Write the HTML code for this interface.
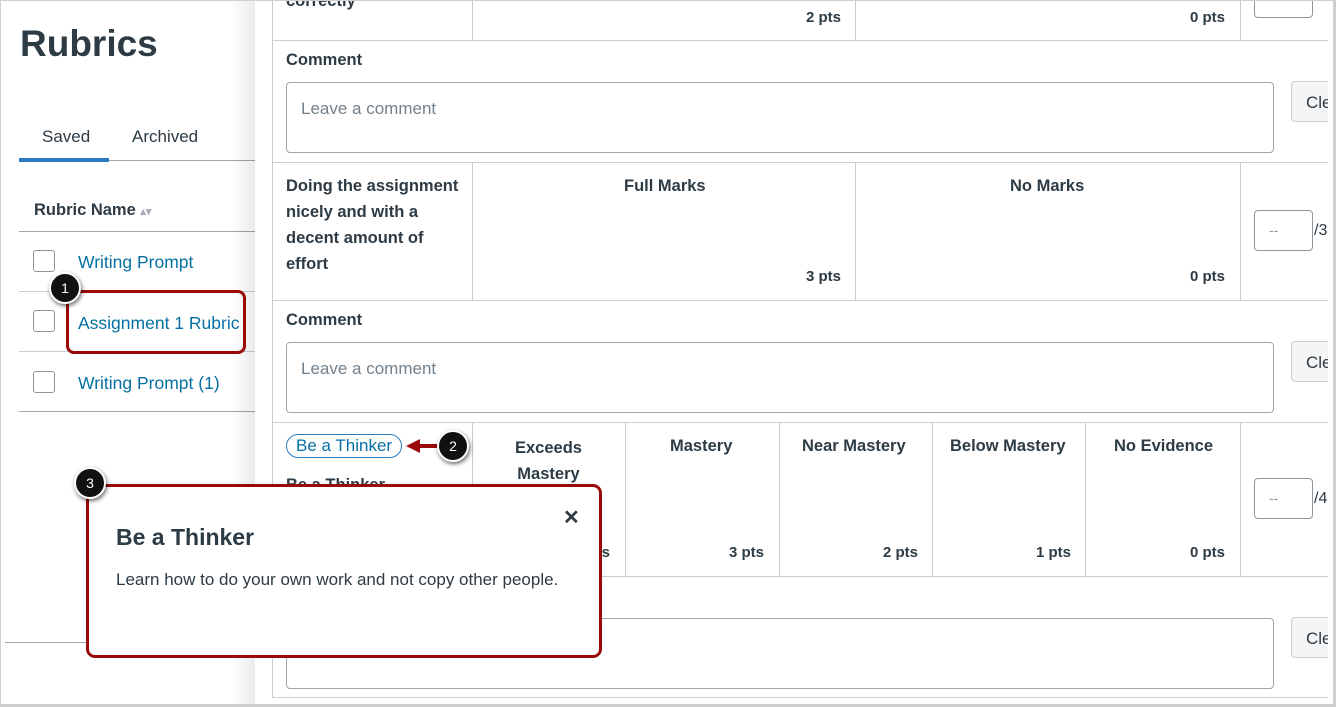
<!DOCTYPE html>
<html><head><meta charset="utf-8"><style>
*{box-sizing:border-box;margin:0;padding:0}
body{width:1336px;height:707px;overflow:hidden;background:#fff;font-family:"Liberation Sans",sans-serif;color:#2d3b45;position:relative}
.a{position:absolute;white-space:nowrap}
.b{font-weight:bold;font-size:16.5px}
.hl{position:absolute;height:1px;background:#c7cdd1}
.vl{position:absolute;width:1px;background:#c7cdd1}
.ta{position:absolute;border:1px solid #a0a6ab;border-radius:4px;background:#fff}
.ph{position:absolute;left:14px;top:16px;color:#73818c;font-size:17px}
.btn{position:absolute;left:1291px;width:37px;height:41px;background:#f5f5f5;border:1px solid #c7cdd1;border-right:none;border-radius:4px 0 0 4px;font-size:17px;padding:11px 0 0 14px;overflow:hidden}
.cb{position:absolute;left:33px;width:22px;height:22px;border:1px solid #8b969e;border-radius:3px}
.lk{color:#0770a3;font-size:17.5px}
.pt{position:absolute;width:59px;height:41px;border:1px solid #8b969e;border-radius:4px;color:#8b969e;font-size:14px;padding:11px 0 0 14px}
.circ{position:absolute;width:32px;height:32px;border-radius:50%;background:#111;border:2px solid #fff;color:#fff;font-size:14px;text-align:center;line-height:28px;box-shadow:1px 2px 4px rgba(0,0,0,.6)}
.pts{font-weight:bold;font-size:15px}
</style></head><body>
<!-- left -->
<div class="a" style="left:20px;top:23px;font-size:37px;font-weight:bold">Rubrics</div>
<div class="a" style="left:42px;top:127px;font-size:17px">Saved</div>
<div class="a" style="left:132px;top:127px;font-size:17px">Archived</div>
<div class="hl" style="left:19px;top:160px;width:240px;background:#a0a6ab"></div>
<div class="a" style="left:19px;top:158px;width:90px;height:4px;background:#2b7abc"></div>
<div class="a b" style="left:34px;top:201px">Rubric Name <span style="color:#aab;font-size:11px">&#x25B4;&#x25BE;</span></div>
<div class="hl" style="left:19px;top:231px;width:240px;background:#a0a6ab"></div>
<div class="cb" style="top:250px"></div><div class="a lk" style="left:78px;top:252px">Writing Prompt</div>
<div class="hl" style="left:19px;top:291px;width:240px"></div>
<div class="cb" style="top:310px"></div><div class="a lk" style="left:78px;top:313px">Assignment 1 Rubric</div>
<div class="hl" style="left:19px;top:351px;width:240px"></div>
<div class="cb" style="top:371px"></div><div class="a lk" style="left:78px;top:373px">Writing Prompt (1)</div>
<div class="hl" style="left:19px;top:411px;width:240px;background:#a0a6ab"></div>
<div class="hl" style="left:5px;top:642px;width:250px;background:#a0a6ab"></div>
<!-- panel shadow -->
<div class="a" style="left:230px;top:0;width:25px;height:707px;background:linear-gradient(to right,rgba(255,255,255,0),rgba(0,0,0,.08))"></div>
<div class="a" style="left:255px;top:0;width:1081px;height:707px;background:#fff"></div>
<div class="vl" style="left:272px;top:0;height:697px"></div>
<!-- row 1 -->
<div class="a b" style="left:286px;top:-8px">correctly</div>
<div class="vl" style="left:472px;top:0;height:40px"></div>
<div class="vl" style="left:855px;top:0;height:40px"></div>
<div class="vl" style="left:1240px;top:0;height:40px"></div>
<div class="a pts" style="left:806px;top:9px">2 pts</div>
<div class="a pts" style="left:1190px;top:9px">0 pts</div>
<div class="a" style="left:1254px;top:-5px;width:59px;height:23px;border:1px solid #8b969e;border-radius:4px"></div>
<div class="hl" style="left:272px;top:40px;width:1056px"></div>
<div class="a b" style="left:286px;top:51px">Comment</div>
<div class="ta" style="left:286px;top:82px;width:988px;height:71px"><span class="ph">Leave a comment</span></div>
<div class="btn" style="top:81px">Cle</div>
<div class="hl" style="left:272px;top:162px;width:1056px"></div>
<!-- row 2 -->
<div class="a b" style="left:286px;top:173px;line-height:26px;white-space:normal;width:176px">Doing the assignment nicely and with a decent amount of effort</div>
<div class="vl" style="left:472px;top:162px;height:138px"></div>
<div class="vl" style="left:855px;top:162px;height:138px"></div>
<div class="vl" style="left:1240px;top:162px;height:138px"></div>
<div class="a b" style="left:624px;top:177px">Full Marks</div>
<div class="a b" style="left:1010px;top:177px">No Marks</div>
<div class="a pts" style="left:806px;top:268px">3 pts</div>
<div class="a pts" style="left:1190px;top:268px">0 pts</div>
<div class="pt" style="left:1254px;top:210px">--</div><div class="a" style="left:1314px;top:222px;font-size:16px">/3</div>
<div class="hl" style="left:272px;top:300px;width:1056px"></div>
<div class="a b" style="left:286px;top:311px">Comment</div>
<div class="ta" style="left:286px;top:342px;width:988px;height:71px"><span class="ph">Leave a comment</span></div>
<div class="btn" style="top:341px">Cle</div>
<div class="hl" style="left:272px;top:422px;width:1056px"></div>
<!-- row 3 -->
<div class="a" style="left:286px;top:434px;border:1px solid #2b7abc;border-radius:12px;padding:1px 9px;font-size:17px;color:#0770a3">Be a Thinker</div>
<div class="a b" style="left:286px;top:476px">Be a Thinker</div>
<div class="vl" style="left:472px;top:422px;height:154px"></div>
<div class="vl" style="left:625px;top:422px;height:154px"></div>
<div class="vl" style="left:779px;top:422px;height:154px"></div>
<div class="vl" style="left:932px;top:422px;height:154px"></div>
<div class="vl" style="left:1085px;top:422px;height:154px"></div>
<div class="vl" style="left:1240px;top:422px;height:154px"></div>
<div class="a b" style="left:515px;top:435px;line-height:26px;text-align:center">Exceeds<br>Mastery</div>
<div class="a b" style="left:670px;top:437px">Mastery</div>
<div class="a b" style="left:802px;top:437px">Near Mastery</div>
<div class="a b" style="left:950px;top:437px">Below Mastery</div>
<div class="a b" style="left:1114px;top:437px">No Evidence</div>
<div class="a pts" style="left:575px;top:544px">4 pts</div>
<div class="a pts" style="left:729px;top:544px">3 pts</div>
<div class="a pts" style="left:883px;top:544px">2 pts</div>
<div class="a pts" style="left:1036px;top:544px">1 pts</div>
<div class="a pts" style="left:1190px;top:544px">0 pts</div>
<div class="pt" style="left:1254px;top:478px">--</div><div class="a" style="left:1314px;top:490px;font-size:16px">/4</div>
<div class="hl" style="left:272px;top:576px;width:1056px"></div>
<div class="a b" style="left:286px;top:587px">Comment</div>
<div class="ta" style="left:286px;top:618px;width:988px;height:71px"><span class="ph">Leave a comment</span></div>
<div class="btn" style="top:617px">Cle</div>
<div class="hl" style="left:272px;top:697px;width:1056px"></div>
<!-- popover -->
<div class="a" style="left:86px;top:484px;width:516px;height:174px;border:3px solid #9b0a0a;border-radius:9px;background:#fff">
<div class="a" style="left:27px;top:37px;font-size:23px;font-weight:bold">Be a Thinker</div>
<div class="a" style="left:27px;top:83px;font-size:17px">Learn how to do your own work and not copy other people.</div>
<div class="a" style="left:474px;top:18px;font-size:20px;font-weight:bold">&#x2715;</div>
</div>
<!-- callouts -->
<div class="a" style="left:66px;top:290px;width:180px;height:64px;border:3px solid #9b0a0a;border-radius:8px"></div>
<svg class="a" style="left:400px;top:436px" width="45" height="20"><path d="M6 10 L20 3 L20 8 L40 8 L40 12 L20 12 L20 17 Z" fill="#9b0a0a"/></svg>
<div class="circ" style="left:49px;top:272px">1</div>
<div class="circ" style="left:437px;top:430px">2</div>
<div class="circ" style="left:74px;top:467px">3</div>
<!-- frame -->
<div class="a" style="left:0;top:0;width:1336px;height:707px;border:1px solid #d0d0d0;border-right:3px solid #cfcfcf;border-bottom:3px solid #cfcfcf"></div>
</body></html>
